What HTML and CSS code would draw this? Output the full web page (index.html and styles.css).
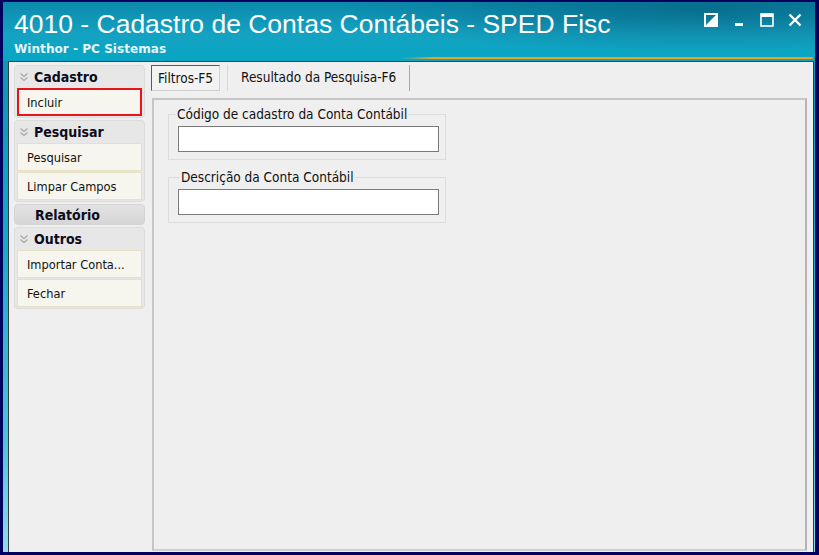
FILE: index.html
```html
<!DOCTYPE html>
<html>
<head>
  <link rel="stylesheet" href="styles.css">
</head>
<body>
  <div class="window">
    <div class="titlebar">
      <div class="title-block">
        <h1>4010 - Cadastro de Contas Contábeis - SPED Fisc</h1>
        <div class="subtitle">Winthor - PC Sistemas</div>
      </div>
      <div class="controls">
        <!-- skin toggle -->
        <svg width="14" height="14" viewBox="0 0 14 14">
          <rect x="1" y="1" width="12" height="12" fill="none" stroke="#fff" stroke-width="2"/>
          <polygon points="1,13 13,1 13,13" fill="#fff"/>
        </svg>
        <!-- minimize -->
        <svg width="14" height="14" viewBox="0 0 14 14">
          <rect x="3" y="10" width="8" height="3" fill="#fff"/>
        </svg>
        <!-- maximize -->
        <svg width="14" height="14" viewBox="0 0 14 14">
          <rect x="1" y="1" width="12" height="12" fill="none" stroke="#fff" stroke-width="1.6"/>
          <rect x="1" y="1" width="12" height="3" fill="#fff"/>
        </svg>
        <!-- close -->
        <svg width="14" height="14" viewBox="0 0 14 14">
          <path d="M1.5 1.5 L12.5 12.5 M12.5 1.5 L1.5 12.5" stroke="#fff" stroke-width="2.4"/>
        </svg>
      </div>
    </div>

    <div class="client">
      <!-- Left action bar -->
      <div class="sidebar">
        <div class="group">
          <div class="group-head">
            <svg class="chev" width="10" height="10" viewBox="0 0 10 10"><path d="M1.5 1.5 L5 4.5 L8.5 1.5 M1.5 5.5 L5 8.5 L8.5 5.5" fill="none" stroke="#a6a6a6" stroke-width="1.2"/></svg>
            Cadastro
          </div>
          <button class="action selected">Incluir</button>
        </div>
        <div class="group">
          <div class="group-head">
            <svg class="chev" width="10" height="10" viewBox="0 0 10 10"><path d="M1.5 1.5 L5 4.5 L8.5 1.5 M1.5 5.5 L5 8.5 L8.5 5.5" fill="none" stroke="#a6a6a6" stroke-width="1.2"/></svg>
            Pesquisar
          </div>
          <button class="action">Pesquisar</button>
          <button class="action">Limpar Campos</button>
        </div>
        <div class="group-head solo">Relatório</div>
        <div class="group">
          <div class="group-head">
            <svg class="chev" width="10" height="10" viewBox="0 0 10 10"><path d="M1.5 1.5 L5 4.5 L8.5 1.5 M1.5 5.5 L5 8.5 L8.5 5.5" fill="none" stroke="#a6a6a6" stroke-width="1.2"/></svg>
            Outros
          </div>
          <button class="action">Importar Conta...</button>
          <button class="action">Fechar</button>
        </div>
      </div>

      <!-- Tabs -->
      <div class="main">
        <div class="tabs">
          <div class="tab active">Filtros-F5</div>
          <div class="tab">Resultado da Pesquisa-F6</div>
        </div>
        <div class="tab-page">
          <fieldset class="field">
            <legend>Código de cadastro da Conta Contábil</legend>
            <input type="text" class="edit">
          </fieldset>
          <fieldset class="field second">
            <legend>Descrição da Conta Contábil</legend>
            <input type="text" class="edit">
          </fieldset>
        </div>
      </div>
    </div>
  </div>
</body>
</html>
```

FILE: styles.css
```css
html, body {
  margin: 0;
  padding: 0;
}

body {
  background: #02025e;
  width: 819px;
  height: 555px;
  overflow: hidden;
  font-family: "DejaVu Sans Condensed", "DejaVu Sans", sans-serif;
  font-size: 12px;
  color: #111;
}

/* outer frame */
.window {
  box-sizing: border-box;
  width: 819px;
  height: 555px;
  border-style: solid;
  border-color: #02025e;
  border-width: 2px 4px 3px 3px;
  background: linear-gradient(to bottom, #0a90b0 0%, #11a8c6 40%, #4cc4dc 80%, #8edced 100%);
  display: flex;
  flex-direction: column;
}

/* Title bar */
.titlebar {
  height: 59px;
  box-sizing: border-box;
  display: flex;
  justify-content: space-between;
  padding: 0 0 0 11px;
  position: relative;
  background:
    radial-gradient(ellipse 520px 60px at 700px 8px, rgba(0, 70, 100, 0.45), rgba(0, 70, 100, 0) 70%),
    linear-gradient(to bottom, #0b8aab 0%, #15a2c2 55%, #06a6c4 100%);
}

/* orange accent under the title */
.titlebar::after {
  content: "";
  position: absolute;
  left: 398px;
  right: 2px;
  bottom: 2px;
  height: 2px;
  background: linear-gradient(to right, rgba(240, 150, 20, 0), #f0a020 8%, #f0a020);
}

.title-block h1 {
  margin: 0;
  padding-top: 7px;
  font-family: "Liberation Sans", Arial, sans-serif;
  font-weight: normal;
  font-size: 26.5px;
  line-height: 30px;
  color: #fff;
}

.subtitle {
  margin-top: 3px;
  font-family: "DejaVu Sans", sans-serif;
  font-weight: bold;
  font-size: 12.1px;
  color: #e4f4fa;
}

.controls {
  display: flex;
  gap: 14px;
  padding: 11px 13px 0 0;
  align-items: flex-start;
}

/* Client area */
.client {
  flex: 1;
  margin: 0 1px 0 5px;
  background: #efefef;
  border-top: 1px solid #3a3a3a;
  border-left: 1px solid #3a3a3a;
  border-right: 1px solid #3a3a3a;
  display: flex;
  gap: 6px;
  padding: 2px 0 0 5px;
}

/* Sidebar */
.sidebar {
  width: 131px;
  display: flex;
  flex-direction: column;
  gap: 2px;
  padding-top: 1px;
}

.group {
  background: #e7e7e7;
  border: 1px solid #dcdcdc;
  border-radius: 4px;
  padding: 0 2px 1px 2px;
  display: flex;
  flex-direction: column;
  gap: 1px;
}

.group-head {
  height: 21px;
  display: flex;
  align-items: center;
  font-weight: bold;
  font-size: 14px;
  color: #0c0c20;
  padding-left: 2px;
  gap: 5px;
}

.group-head.solo {
  background: linear-gradient(to bottom, #e2e2e2, #d6d6d6);
  border: 1px solid #d4d4d4;
  border-radius: 4px;
  height: 19px;
  padding-left: 20px;
}

.action {
  height: 28px;
  text-align: left;
  font-family: inherit;
  font-size: 12.7px;
  color: #111;
  background: #f7f6ee;
  border: 1px solid #e6e1c4;
  padding: 0 0 0 9px;
  margin: 0;
}

.action.selected {
  border: 2px solid #e8141c;
  padding-left: 8px;
}

/* Tabs area */
.main {
  flex: 1;
  display: flex;
  flex-direction: column;
  padding: 1px 6px 0 0;
  font-size: 13.5px;
}

.tabs {
  display: flex;
  height: 26px;
  gap: 7px;
  margin-bottom: 7px;
}

.tab {
  padding: 0 13px;
  line-height: 24px;
  border-right: 1px solid #a8a8a8;
  border-left: 1px solid #d8d8d8;
}

.tab.active {
  padding: 0 6px;
  border: 1px solid #5a5a5a;
  border-right-color: #d0d0d0;
  border-bottom-color: #d0d0d0;
  background: #f3f3f3;
}

.tab-page {
  flex: 1;
  margin-left: 1px;
  border: 2px solid #c6c6c6;
  border-right-color: #b4b4b4;
  border-bottom-color: #cfcfcf;
  margin-bottom: 1px;
  padding: 6px 0 0 14px;
  display: flex;
  flex-direction: column;
  gap: 9px;
}

.field {
  width: 278px;
  box-sizing: border-box;
  margin: 0;
  border: 1px solid #dcdcdc;
  padding: 4px 6px 7px 9px;
}

.field legend {
  padding: 0 1px;
  margin-left: -2px;
}

.field.second legend {
  margin-left: 2px;
}

.edit {
  display: block;
  width: 261px;
  height: 26px;
  box-sizing: border-box;
  border: 1px solid #7a7a7a;
  background: #fff;
  margin: 0;
}
```
